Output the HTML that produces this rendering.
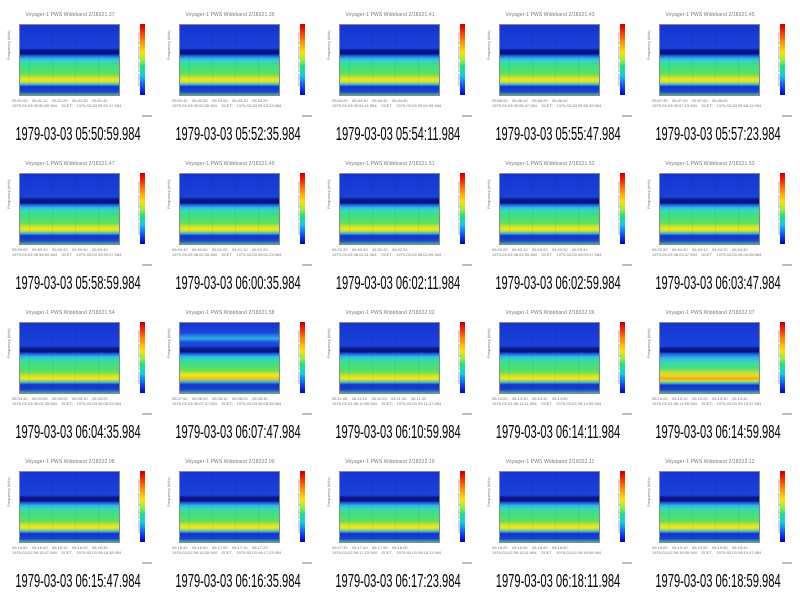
<!DOCTYPE html>
<html><head><meta charset="utf-8"><style>
body{margin:0;width:800px;height:596px;background:#fff;position:relative;overflow:hidden;font-family:"Liberation Sans",sans-serif}
.c{position:absolute;width:160px;height:149px}
.t{position:absolute;left:20px;width:100px;top:12px;text-align:center;font-size:5px;color:#777;white-space:nowrap;letter-spacing:.1px}
.p{position:absolute;left:19px;top:24px;width:101px;height:72px;box-sizing:border-box;border:1px solid #888;
background:
repeating-linear-gradient(90deg,rgba(0,0,60,0) 0 9px,rgba(0,0,60,.06) 9px 10px,rgba(0,0,60,0) 10px 23px),
linear-gradient(180deg,#1634d0 0%,#1a42da 33%,#0a1a92 36%,#08127c 41%,#1d5ce6 44%,#2fb8e6 48%,#36d8b0 52%,#44df80 60%,#5ee060 70%,#b8e030 74%,#ece824 78%,#d8e030 81%,#3cb8d0 85%,#1436c8 88%,#1a40d4 95%,#48b090 100%)}
.v2{background:
linear-gradient(180deg,#1634d0 0%,#1b48de 14%,#30b0e8 22%,#1b48de 28%,#1b45de 33%,#0a1a92 36%,#08127c 41%,#1d5ce6 44%,#2fb8e6 48%,#36d8b0 52%,#44df80 60%,#70e050 68%,#ece824 74%,#f0c020 80%,#3cb8d0 84%,#1436c8 88%,#1a40d4 95%,#48b090 100%)}
.v3{background:
linear-gradient(180deg,#1634d0 0%,#1b45de 33%,#0a1a92 36%,#08127c 41%,#1d5ce6 44%,#2fb8e6 50%,#36d8b0 56%,#44df80 64%,#d0e030 72%,#f0d020 76%,#f0a020 80%,#e8e020 82%,#3cb8d0 86%,#1436c8 89%,#1a40d4 95%,#48b090 100%)}
.yl{position:absolute;left:6px;top:60px;font-size:4px;color:#777;transform:rotate(-90deg);transform-origin:0 0;white-space:nowrap}
.xt{position:absolute;left:12px;width:120px;font-size:4px;color:#777;white-space:nowrap}
.cb{position:absolute;left:140px;top:24px;width:5px;height:71px;background:linear-gradient(180deg,#c00000 0%,#ff2000 10%,#ff9000 25%,#ffe000 40%,#90f040 52%,#20e080 60%,#10d0e0 72%,#1060ff 85%,#0000c0 100%)}
.rl{position:absolute;left:136px;top:86px;font-size:4px;color:#999;transform:rotate(-90deg);transform-origin:0 0;white-space:nowrap}
.mk{position:absolute;left:142px;top:115px;width:10px;height:2px;background:#bbb}
.cap{position:absolute;left:-42px;width:240px;top:125px;text-align:center;font-size:18px;line-height:18px;color:#000;white-space:nowrap;transform:scaleX(.62);transform-origin:120px 0}
</style></head><body>

<div class="c" style="left:0;top:0"><div class="t">Voyager-1 PWS Wideband 2/18321.37</div><div class="p"></div><div class="cb"></div><div class="cap">1979-03-03 05:50:59.984</div><div class="mk"></div><div class="xt" style="top:98px">05:51:00 &nbsp;&nbsp; 05:51:10 &nbsp;&nbsp; 05:51:20 &nbsp;&nbsp; 05:51:30 &nbsp;&nbsp; 05:51:40</div><div class="xt" style="top:103px">1979-03-03 05:50:59.984 &nbsp;&nbsp; SCET &nbsp;&nbsp; 1979-03-03 05:51:47.984</div><div class="yl">Frequency (kHz)</div><div class="rl">relative power spectral density</div></div>
<div class="c" style="left:160px;top:0"><div class="t">Voyager-1 PWS Wideband 2/18321.39</div><div class="p"></div><div class="cb"></div><div class="cap">1979-03-03 05:52:35.984</div><div class="mk"></div><div class="xt" style="top:98px">05:52:40 &nbsp;&nbsp; 05:52:50 &nbsp;&nbsp; 05:53:00 &nbsp;&nbsp; 05:53:10 &nbsp;&nbsp; 05:53:20</div><div class="xt" style="top:103px">1979-03-03 05:52:35.984 &nbsp;&nbsp; SCET &nbsp;&nbsp; 1979-03-03 05:53:23.984</div><div class="yl">Frequency (kHz)</div><div class="rl">relative power spectral density</div></div>
<div class="c" style="left:320px;top:0"><div class="t">Voyager-1 PWS Wideband 2/18321.41</div><div class="p"></div><div class="cb"></div><div class="cap">1979-03-03 05:54:11.984</div><div class="mk"></div><div class="xt" style="top:98px">05:54:20 &nbsp;&nbsp; 05:54:30 &nbsp;&nbsp; 05:54:40 &nbsp;&nbsp; 05:54:50</div><div class="xt" style="top:103px">1979-03-03 05:54:11.984 &nbsp;&nbsp; SCET &nbsp;&nbsp; 1979-03-03 05:54:59.984</div><div class="yl">Frequency (kHz)</div><div class="rl">relative power spectral density</div></div>
<div class="c" style="left:480px;top:0"><div class="t">Voyager-1 PWS Wideband 2/18321.43</div><div class="p"></div><div class="cb"></div><div class="cap">1979-03-03 05:55:47.984</div><div class="mk"></div><div class="xt" style="top:98px">05:56:00 &nbsp;&nbsp; 05:56:10 &nbsp;&nbsp; 05:56:20 &nbsp;&nbsp; 05:56:30</div><div class="xt" style="top:103px">1979-03-03 05:55:47.984 &nbsp;&nbsp; SCET &nbsp;&nbsp; 1979-03-03 05:56:35.984</div><div class="yl">Frequency (kHz)</div><div class="rl">relative power spectral density</div></div>
<div class="c" style="left:640px;top:0"><div class="t">Voyager-1 PWS Wideband 2/18321.45</div><div class="p"></div><div class="cb"></div><div class="cap">1979-03-03 05:57:23.984</div><div class="mk"></div><div class="xt" style="top:98px">05:57:30 &nbsp;&nbsp; 05:57:40 &nbsp;&nbsp; 05:57:50 &nbsp;&nbsp; 05:58:00</div><div class="xt" style="top:103px">1979-03-03 05:57:23.984 &nbsp;&nbsp; SCET &nbsp;&nbsp; 1979-03-03 05:58:11.984</div><div class="yl">Frequency (kHz)</div><div class="rl">relative power spectral density</div></div>

<div class="c" style="left:0;top:149px"><div class="t">Voyager-1 PWS Wideband 2/18321.47</div><div class="p"></div><div class="cb"></div><div class="cap">1979-03-03 05:58:59.984</div><div class="mk"></div><div class="xt" style="top:98px">05:59:00 &nbsp;&nbsp; 05:59:10 &nbsp;&nbsp; 05:59:20 &nbsp;&nbsp; 05:59:30 &nbsp;&nbsp; 05:59:40</div><div class="xt" style="top:103px">1979-03-03 05:58:59.984 &nbsp;&nbsp; SCET &nbsp;&nbsp; 1979-03-03 05:59:47.984</div><div class="yl">Frequency (kHz)</div><div class="rl">relative power spectral density</div></div>
<div class="c" style="left:160px;top:149px"><div class="t">Voyager-1 PWS Wideband 2/18321.49</div><div class="p"></div><div class="cb"></div><div class="cap">1979-03-03 06:00:35.984</div><div class="mk"></div><div class="xt" style="top:98px">06:00:40 &nbsp;&nbsp; 06:00:50 &nbsp;&nbsp; 06:01:00 &nbsp;&nbsp; 06:01:10 &nbsp;&nbsp; 06:01:20</div><div class="xt" style="top:103px">1979-03-03 06:00:35.984 &nbsp;&nbsp; SCET &nbsp;&nbsp; 1979-03-03 06:01:23.984</div><div class="yl">Frequency (kHz)</div><div class="rl">relative power spectral density</div></div>
<div class="c" style="left:320px;top:149px"><div class="t">Voyager-1 PWS Wideband 2/18321.51</div><div class="p"></div><div class="cb"></div><div class="cap">1979-03-03 06:02:11.984</div><div class="mk"></div><div class="xt" style="top:98px">06:02:20 &nbsp;&nbsp; 06:02:30 &nbsp;&nbsp; 06:02:40 &nbsp;&nbsp; 06:02:50</div><div class="xt" style="top:103px">1979-03-03 06:02:11.984 &nbsp;&nbsp; SCET &nbsp;&nbsp; 1979-03-03 06:02:59.984</div><div class="yl">Frequency (kHz)</div><div class="rl">relative power spectral density</div></div>
<div class="c" style="left:480px;top:149px"><div class="t">Voyager-1 PWS Wideband 2/18321.52</div><div class="p"></div><div class="cb"></div><div class="cap">1979-03-03 06:02:59.984</div><div class="mk"></div><div class="xt" style="top:98px">06:03:00 &nbsp;&nbsp; 06:03:10 &nbsp;&nbsp; 06:03:20 &nbsp;&nbsp; 06:03:30 &nbsp;&nbsp; 06:03:40</div><div class="xt" style="top:103px">1979-03-03 06:02:59.984 &nbsp;&nbsp; SCET &nbsp;&nbsp; 1979-03-03 06:03:47.984</div><div class="yl">Frequency (kHz)</div><div class="rl">relative power spectral density</div></div>
<div class="c" style="left:640px;top:149px"><div class="t">Voyager-1 PWS Wideband 2/18321.53</div><div class="p"></div><div class="cb"></div><div class="cap">1979-03-03 06:03:47.984</div><div class="mk"></div><div class="xt" style="top:98px">06:03:50 &nbsp;&nbsp; 06:04:00 &nbsp;&nbsp; 06:04:10 &nbsp;&nbsp; 06:04:20 &nbsp;&nbsp; 06:04:30</div><div class="xt" style="top:103px">1979-03-03 06:03:47.984 &nbsp;&nbsp; SCET &nbsp;&nbsp; 1979-03-03 06:04:35.984</div><div class="yl">Frequency (kHz)</div><div class="rl">relative power spectral density</div></div>

<div class="c" style="left:0;top:298px"><div class="t">Voyager-1 PWS Wideband 2/18321.54</div><div class="p"></div><div class="cb"></div><div class="cap">1979-03-03 06:04:35.984</div><div class="mk"></div><div class="xt" style="top:98px">06:04:40 &nbsp;&nbsp; 06:04:50 &nbsp;&nbsp; 06:05:00 &nbsp;&nbsp; 06:05:10 &nbsp;&nbsp; 06:05:20</div><div class="xt" style="top:103px">1979-03-03 06:04:35.984 &nbsp;&nbsp; SCET &nbsp;&nbsp; 1979-03-03 06:05:23.984</div><div class="yl">Frequency (kHz)</div><div class="rl">relative power spectral density</div></div>
<div class="c" style="left:160px;top:298px"><div class="t">Voyager-1 PWS Wideband 2/18321.58</div><div class="p v2"></div><div class="cb"></div><div class="cap">1979-03-03 06:07:47.984</div><div class="mk"></div><div class="xt" style="top:98px">06:07:50 &nbsp;&nbsp; 06:08:00 &nbsp;&nbsp; 06:08:10 &nbsp;&nbsp; 06:08:20 &nbsp;&nbsp; 06:08:30</div><div class="xt" style="top:103px">1979-03-03 06:07:47.984 &nbsp;&nbsp; SCET &nbsp;&nbsp; 1979-03-03 06:08:35.984</div><div class="yl">Frequency (kHz)</div><div class="rl">relative power spectral density</div></div>
<div class="c" style="left:320px;top:298px"><div class="t">Voyager-1 PWS Wideband 2/18322.02</div><div class="p"></div><div class="cb"></div><div class="cap">1979-03-03 06:10:59.984</div><div class="mk"></div><div class="xt" style="top:98px">06:11:00 &nbsp;&nbsp; 06:11:10 &nbsp;&nbsp; 06:11:20 &nbsp;&nbsp; 06:11:30 &nbsp;&nbsp; 06:11:40</div><div class="xt" style="top:103px">1979-03-03 06:10:59.984 &nbsp;&nbsp; SCET &nbsp;&nbsp; 1979-03-03 06:11:47.984</div><div class="yl">Frequency (kHz)</div><div class="rl">relative power spectral density</div></div>
<div class="c" style="left:480px;top:298px"><div class="t">Voyager-1 PWS Wideband 2/18322.06</div><div class="p"></div><div class="cb"></div><div class="cap">1979-03-03 06:14:11.984</div><div class="mk"></div><div class="xt" style="top:98px">06:14:20 &nbsp;&nbsp; 06:14:30 &nbsp;&nbsp; 06:14:40 &nbsp;&nbsp; 06:14:50</div><div class="xt" style="top:103px">1979-03-03 06:14:11.984 &nbsp;&nbsp; SCET &nbsp;&nbsp; 1979-03-03 06:14:59.984</div><div class="yl">Frequency (kHz)</div><div class="rl">relative power spectral density</div></div>
<div class="c" style="left:640px;top:298px"><div class="t">Voyager-1 PWS Wideband 2/18322.07</div><div class="p v3"></div><div class="cb"></div><div class="cap">1979-03-03 06:14:59.984</div><div class="mk"></div><div class="xt" style="top:98px">06:15:00 &nbsp;&nbsp; 06:15:10 &nbsp;&nbsp; 06:15:20 &nbsp;&nbsp; 06:15:30 &nbsp;&nbsp; 06:15:40</div><div class="xt" style="top:103px">1979-03-03 06:14:59.984 &nbsp;&nbsp; SCET &nbsp;&nbsp; 1979-03-03 06:15:47.984</div><div class="yl">Frequency (kHz)</div><div class="rl">relative power spectral density</div></div>

<div class="c" style="left:0;top:447px"><div class="t">Voyager-1 PWS Wideband 2/18322.08</div><div class="p"></div><div class="cb"></div><div class="cap">1979-03-03 06:15:47.984</div><div class="mk"></div><div class="xt" style="top:98px">06:15:50 &nbsp;&nbsp; 06:16:00 &nbsp;&nbsp; 06:16:10 &nbsp;&nbsp; 06:16:20 &nbsp;&nbsp; 06:16:30</div><div class="xt" style="top:103px">1979-03-03 06:15:47.984 &nbsp;&nbsp; SCET &nbsp;&nbsp; 1979-03-03 06:16:35.984</div><div class="yl">Frequency (kHz)</div><div class="rl">relative power spectral density</div></div>
<div class="c" style="left:160px;top:447px"><div class="t">Voyager-1 PWS Wideband 2/18322.09</div><div class="p"></div><div class="cb"></div><div class="cap">1979-03-03 06:16:35.984</div><div class="mk"></div><div class="xt" style="top:98px">06:16:40 &nbsp;&nbsp; 06:16:50 &nbsp;&nbsp; 06:17:00 &nbsp;&nbsp; 06:17:10 &nbsp;&nbsp; 06:17:20</div><div class="xt" style="top:103px">1979-03-03 06:16:35.984 &nbsp;&nbsp; SCET &nbsp;&nbsp; 1979-03-03 06:17:23.984</div><div class="yl">Frequency (kHz)</div><div class="rl">relative power spectral density</div></div>
<div class="c" style="left:320px;top:447px"><div class="t">Voyager-1 PWS Wideband 2/18322.10</div><div class="p"></div><div class="cb"></div><div class="cap">1979-03-03 06:17:23.984</div><div class="mk"></div><div class="xt" style="top:98px">06:17:30 &nbsp;&nbsp; 06:17:40 &nbsp;&nbsp; 06:17:50 &nbsp;&nbsp; 06:18:00</div><div class="xt" style="top:103px">1979-03-03 06:17:23.984 &nbsp;&nbsp; SCET &nbsp;&nbsp; 1979-03-03 06:18:11.984</div><div class="yl">Frequency (kHz)</div><div class="rl">relative power spectral density</div></div>
<div class="c" style="left:480px;top:447px"><div class="t">Voyager-1 PWS Wideband 2/18322.11</div><div class="p"></div><div class="cb"></div><div class="cap">1979-03-03 06:18:11.984</div><div class="mk"></div><div class="xt" style="top:98px">06:18:20 &nbsp;&nbsp; 06:18:30 &nbsp;&nbsp; 06:18:40 &nbsp;&nbsp; 06:18:50</div><div class="xt" style="top:103px">1979-03-03 06:18:11.984 &nbsp;&nbsp; SCET &nbsp;&nbsp; 1979-03-03 06:18:59.984</div><div class="yl">Frequency (kHz)</div><div class="rl">relative power spectral density</div></div>
<div class="c" style="left:640px;top:447px"><div class="t">Voyager-1 PWS Wideband 2/18322.12</div><div class="p"></div><div class="cb"></div><div class="cap">1979-03-03 06:18:59.984</div><div class="mk"></div><div class="xt" style="top:98px">06:19:00 &nbsp;&nbsp; 06:19:10 &nbsp;&nbsp; 06:19:20 &nbsp;&nbsp; 06:19:30 &nbsp;&nbsp; 06:19:40</div><div class="xt" style="top:103px">1979-03-03 06:18:59.984 &nbsp;&nbsp; SCET &nbsp;&nbsp; 1979-03-03 06:19:47.984</div><div class="yl">Frequency (kHz)</div><div class="rl">relative power spectral density</div></div>
</body></html>
